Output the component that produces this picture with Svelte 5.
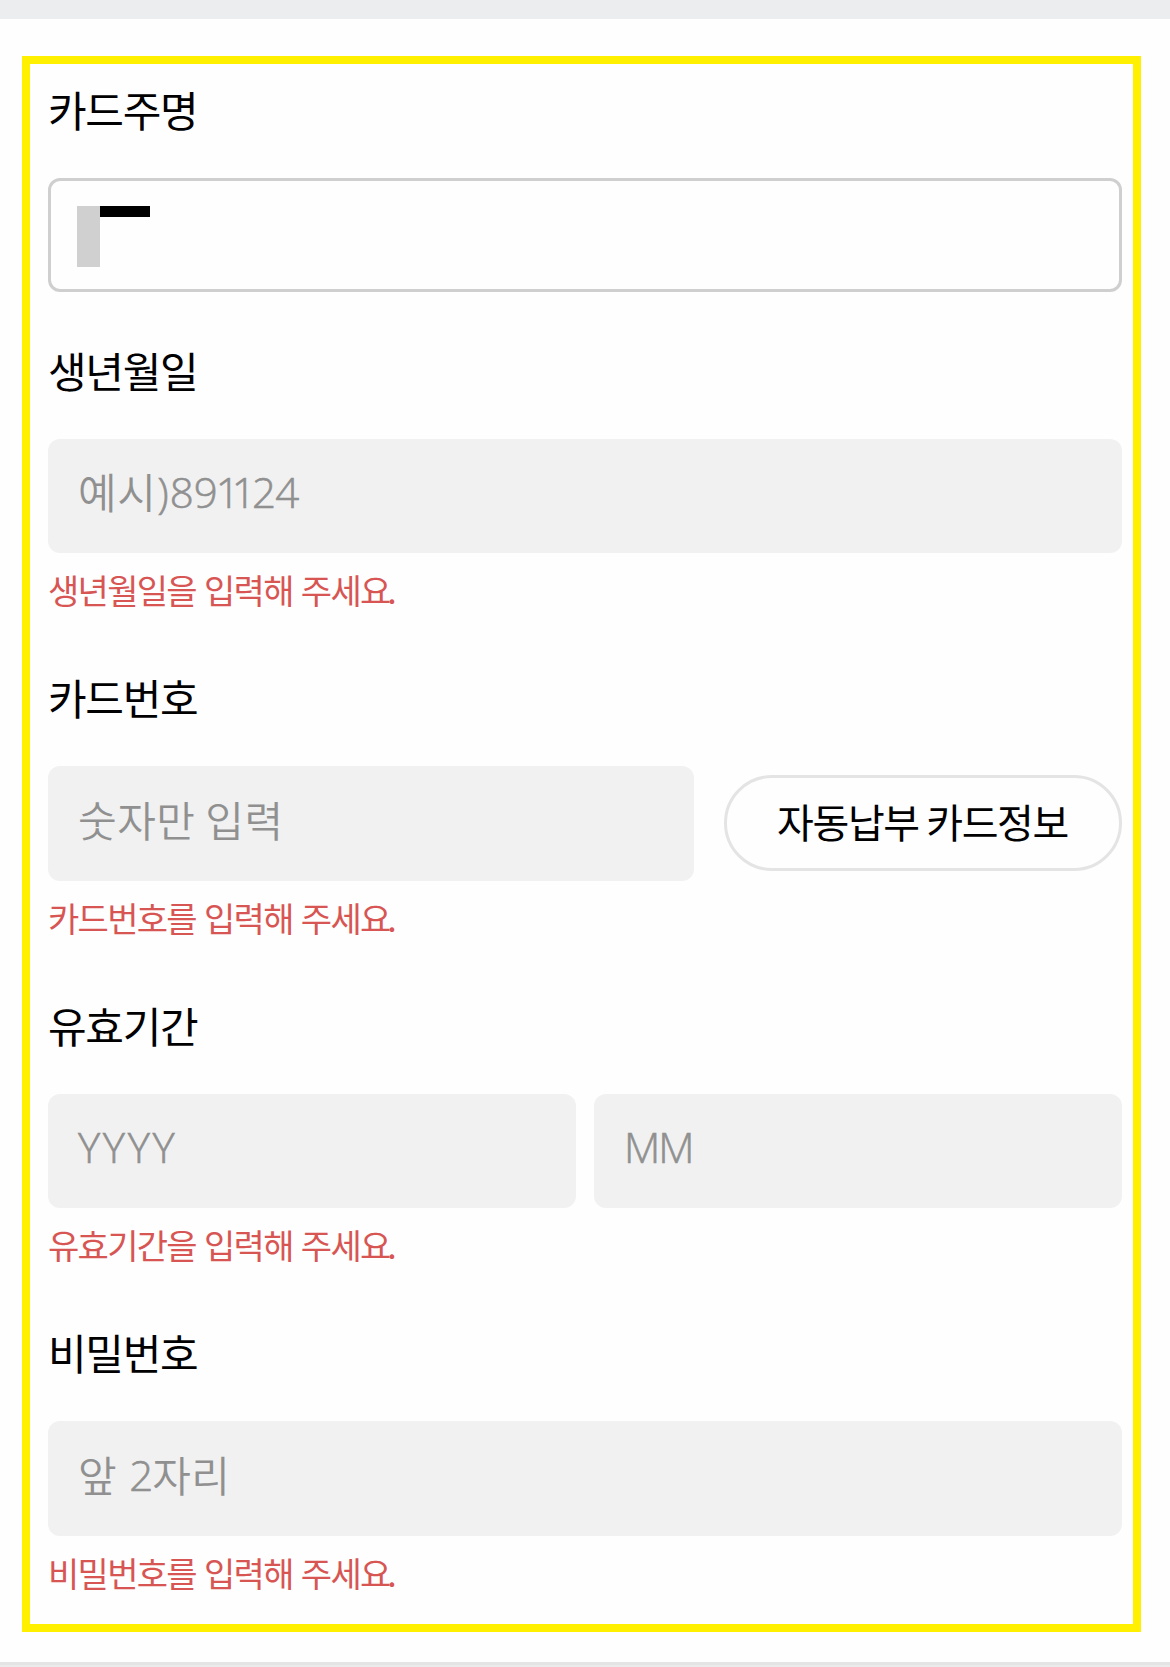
<script>
  const birthHint = [
    { text: '예시', kind: 'ko' },
    { text: ')', kind: 'latin paren' },
    { text: '89', kind: 'latin' },
    { text: '11', kind: 'latin ones' },
    { text: '24', kind: 'latin last' }
  ];
</script>

{#snippet error(subject)}
  <p class="error">{subject} 입력해 주세<span class="tight">요</span>.</p>
{/snippet}

<main>
  <div class="top-band"></div>
  <form class="card-form">
    <section class="field owner">
      <h2>카드주명</h2>
      <div class="input filled"><span class="mask-block"></span><span class="mask-bar"></span></div>
    </section>

    <section class="field">
      <h2>생년월일</h2>
      <div class="input birth">
        {#each birthHint as part}<span class={part.kind}>{part.text}</span>{/each}
      </div>
      {@render error('생년월일을')}
    </section>

    <section class="field">
      <h2>카드번호</h2>
      <div class="row wide-gap">
        <div class="input"><span class="ko">숫자만 입력</span></div>
        <button type="button">자동납부 카드정보</button>
      </div>
      {@render error('카드번호를')}
    </section>

    <section class="field">
      <h2>유효기간</h2>
      <div class="row">
        <div class="input"><span class="latin year">YYYY</span></div>
        <div class="input"><span class="latin month">MM</span></div>
      </div>
      {@render error('유효기간을')}
    </section>

    <section class="field">
      <h2>비밀번호</h2>
      <div class="input"><span class="ko">앞</span><span class="latin two">2</span><span class="ko">자리</span></div>
      {@render error('비밀번호를')}
    </section>
  </form>
  <div class="bottom-band"></div>
</main>

<style>
  :global(body) { margin: 0; background: #fefefe; }
  main {
    width: 1170px;
    height: 1667px;
    overflow: hidden;
    display: flex;
    flex-direction: column;
    background: #fefefe;
    font-family: "Noto Sans CJK KR", sans-serif;
    color: #000;
  }
  .top-band { flex: none; height: 19px; background: #ebedee; }
  .card-form {
    flex: none;
    box-sizing: border-box;
    width: 1119px;
    height: 1576px;
    margin: 37px 0 0 22px;
    padding: 15px 11px 0 18px;
    border: 8px solid #fff000;
  }
  .bottom-band {
    flex: none;
    box-sizing: border-box;
    height: 5px;
    margin-top: 30px;
    border-top: 3px solid #e4e4e4;
    background: #ebebeb;
  }
  .field { margin-bottom: 52px; }
  .owner { margin-bottom: 47.6px; }
  h2 {
    margin: 0 0 39px;
    height: 60px;
    line-height: 60px;
    font-size: 42px;
    font-weight: 400;
    letter-spacing: -1.3px;
    white-space: nowrap;
  }
  .input {
    box-sizing: border-box;
    flex: 1;
    display: flex;
    align-items: center;
    height: 114.4px;
    padding: 0 30px 9px;
    border-radius: 12px;
    background: #f1f1f1;
    color: #909090;
    font-size: 42px;
    font-weight: 350;
    line-height: 60px;
    white-space: nowrap;
  }
  .birth { padding-bottom: 11px; }
  .filled {
    align-items: flex-start;
    padding: 25px 26px;
    border: 3px solid #cfcfcf;
    background: #fefefe;
  }
  .mask-block { width: 23px; height: 61px; background: #d0d0d0; }
  .mask-bar { width: 50px; height: 11px; background: #000; }
  .ko { letter-spacing: 0.5px; }
  .latin {
    margin-top: 2px;
    font-family: "Open Sans", sans-serif;
    font-weight: 300;
    -webkit-text-stroke: 0.6px #909090;
  }
  .paren { margin-left: 1px; margin-right: 1px; }
  .ones { margin-left: -2px; margin-right: 4px; letter-spacing: -7.8px; }
  .last { letter-spacing: -0.8px; }
  .two { margin-left: 12px; margin-right: -1px; }
  .year { letter-spacing: 2.7px; }
  .month { letter-spacing: -1.9px; }
  .row { display: flex; align-items: flex-start; gap: 18px; }
  .wide-gap { gap: 30px; }
  button {
    box-sizing: border-box;
    flex: none;
    width: 398px;
    height: 96px;
    margin-top: 8.6px;
    padding: 0 1px 3px 0;
    border: 3px solid #e4e4e4;
    border-radius: 48px;
    background: #fefefe;
    color: #000;
    font: 400 40px/56px "Noto Sans CJK KR", sans-serif;
    letter-spacing: -1.4px;
  }
  .error {
    margin: 12px 0 0;
    height: 50px;
    line-height: 50px;
    color: #d75654;
    font-size: 34px;
    letter-spacing: -1.7px;
    word-spacing: 2.2px;
    white-space: nowrap;
  }
  .tight { letter-spacing: -4.1px; }
</style>
